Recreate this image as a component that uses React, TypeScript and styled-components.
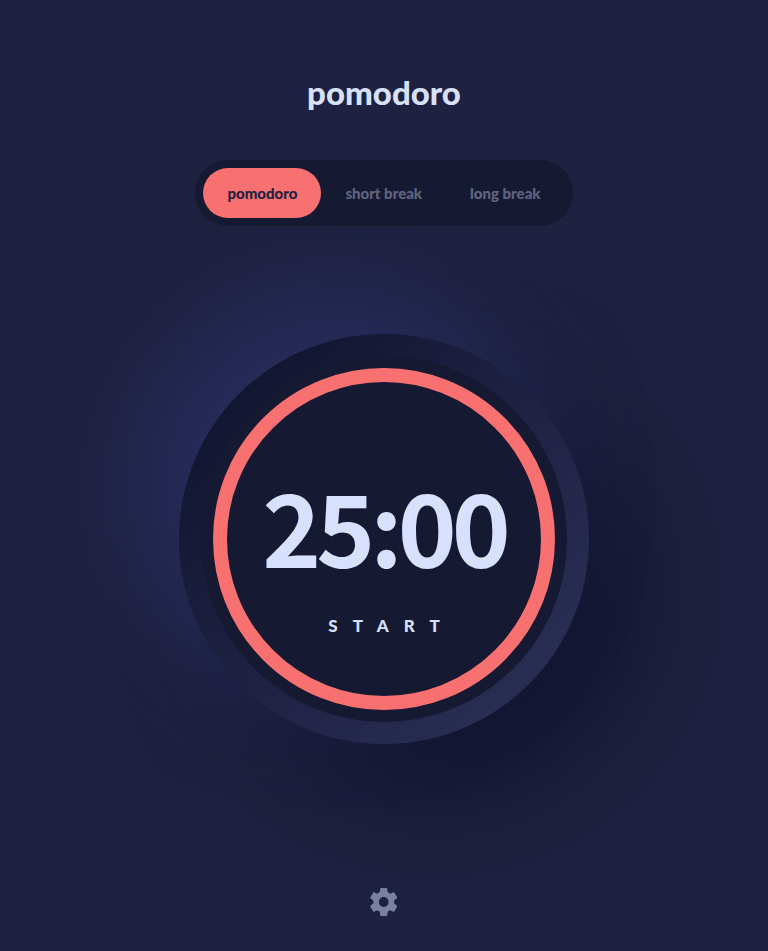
import React, { useEffect, useState } from "react";
import styled, { createGlobalStyle } from "styled-components";

const GlobalStyle = createGlobalStyle`
  *, *::before, *::after { box-sizing: border-box; }
  body {
    margin: 0;
    background: #1e213f;
    color: #d7e0ff;
    font-family: Lato, "Open Sans", sans-serif;
  }
  button { font-family: inherit; border: 0; cursor: pointer; }
`;

const Page = styled.main`
  min-height: 100vh;
  display: flex;
  flex-direction: column;
  align-items: center;
  padding: 72px 24px 35px;
  overflow: hidden;
`;

const Title = styled.h1`
  margin: 0 0 48px;
  font-size: 33px;
  line-height: 40px;
  font-weight: 900;
`;

const Modes = styled.nav`
  display: flex;
  padding: 8px;
  border-radius: 33px;
  background: #161932;
  position: relative;
  z-index: 1;
`;

const ModeButton = styled.button<{ $active: boolean }>`
  height: 50px;
  padding: 0 24px;
  border-radius: 25px;
  font-size: 15px;
  line-height: 20px;
  font-weight: 900;
  white-space: nowrap;
  color: ${(p) => (p.$active ? "#1e213f" : "rgba(215, 224, 255, 0.4)")};
  background: ${(p) => (p.$active ? "#f87070" : "transparent")};
`;

const Dial = styled.section`
  display: grid;
  place-items: center;
  margin: 108px 0 auto;
  padding: 22px;
  border-radius: 50%;
  background: linear-gradient(315deg, #2e325a, #0e112a);
  box-shadow: -50px -50px 100px #272c5a, 50px 50px 100px #121530;
`;

const Face = styled.div`
  display: grid;
  place-items: center;
  width: 366px;
  height: 366px;
  border-radius: 50%;
  background: #161932;

  > * { grid-area: 1 / 1; }
`;

const Ring = styled.svg`
  display: block;
  transform: rotate(-90deg);
`;

const Readout = styled.div`
  display: flex;
  flex-direction: column;
  align-items: center;
  gap: 38px;
  padding-top: 30px;
  z-index: 1;
`;

const Time = styled.time`
  font-family: "Noto Sans CJK SC", "Noto Sans", sans-serif;
  font-size: 100px;
  line-height: 106px;
  font-weight: 700;
  letter-spacing: -5px;
`;

const StartButton = styled.button`
  padding: 0 0 0 15px;
  background: transparent;
  color: #d7e0ff;
  font-size: 17px;
  line-height: 20px;
  font-weight: 900;
  letter-spacing: 15px;
`;

const SettingsButton = styled.button`
  display: block;
  padding: 0;
  background: transparent;
  z-index: 1;
`;

const modes = [
  { name: "pomodoro", minutes: 25 },
  { name: "short break", minutes: 5 },
  { name: "long break", minutes: 15 },
];

const CIRCUMFERENCE = 2 * Math.PI * 164;

export default function App() {
  const [mode, setMode] = useState(0);
  const [left, setLeft] = useState(modes[0].minutes * 60);
  const [running, setRunning] = useState(false);

  useEffect(() => {
    if (!running) return;
    const id = setInterval(() => setLeft((s) => Math.max(0, s - 1)), 1000);
    return () => clearInterval(id);
  }, [running]);

  const choose = (index: number) => {
    setMode(index);
    setLeft(modes[index].minutes * 60);
    setRunning(false);
  };

  const clock = [Math.floor(left / 60), left % 60]
    .map((n) => String(n).padStart(2, "0"))
    .join(":");
  const share = left / (modes[mode].minutes * 60);

  return (
    <>
      <GlobalStyle />
      <Page>
        <Title>pomodoro</Title>
        <Modes aria-label="Timer mode">
          {modes.map((m, i) => (
            <ModeButton
              key={m.name}
              type="button"
              $active={i === mode}
              aria-pressed={i === mode}
              onClick={() => choose(i)}
            >
              {m.name}
            </ModeButton>
          ))}
        </Modes>
        <Dial>
          <Face>
            <Ring width="342" height="342" viewBox="0 0 342 342" aria-hidden="true">
              <circle
                cx="171"
                cy="171"
                r="164"
                fill="none"
                stroke="#f87070"
                strokeWidth="14"
                strokeDasharray={CIRCUMFERENCE}
                strokeDashoffset={CIRCUMFERENCE * (1 - share)}
              />
            </Ring>
            <Readout>
              <Time>{clock}</Time>
              <StartButton type="button" onClick={() => setRunning(!running)}>
                {running ? "PAUSE" : "START"}
              </StartButton>
            </Readout>
          </Face>
        </Dial>
        <SettingsButton type="button" aria-label="Settings">
          <svg display="block" width="28" height="28" viewBox="0 0 28 28" aria-hidden="true">
            <path
              fill="#d7e0ff"
              opacity=".5"
              d="M26.965 17.682l-2.927-2.317c.055-.448.097-.903.097-1.365 0-.462-.042-.917-.097-1.365l2.934-2.317a.702.702 0 00.167-.896l-2.775-4.851a.683.683 0 00-.847-.301l-3.454 1.407a10.506 10.506 0 00-2.345-1.379l-.52-3.71A.716.716 0 0016.503 0h-5.55a.703.703 0 00-.687.588l-.52 3.71c-.847.357-1.63.819-2.345 1.379L3.947 4.27a.691.691 0 00-.847.301L.325 9.422a.705.705 0 00.167.896l2.927 2.317c-.055.448-.097.903-.097 1.365 0 .462.042.917.097 1.365L.492 17.682a.702.702 0 00-.167.896L3.1 23.43a.683.683 0 00.847.301L7.4 22.323c.715.56 1.498 1.022 2.345 1.379l.52 3.71a.703.703 0 00.687.588h5.55a.703.703 0 00.687-.588l.52-3.71a10.506 10.506 0 002.345-1.379l3.454 1.407c.313.119.673 0 .847-.301l2.775-4.851a.705.705 0 00-.167-.896zM13.73 18.9c-2.685 0-4.856-2.191-4.856-4.9 0-2.709 2.171-4.9 4.856-4.9 2.684 0 4.856 2.191 4.856 4.9 0 2.71-2.172 4.9-4.856 4.9z"
            />
          </svg>
        </SettingsButton>
      </Page>
    </>
  );
}
